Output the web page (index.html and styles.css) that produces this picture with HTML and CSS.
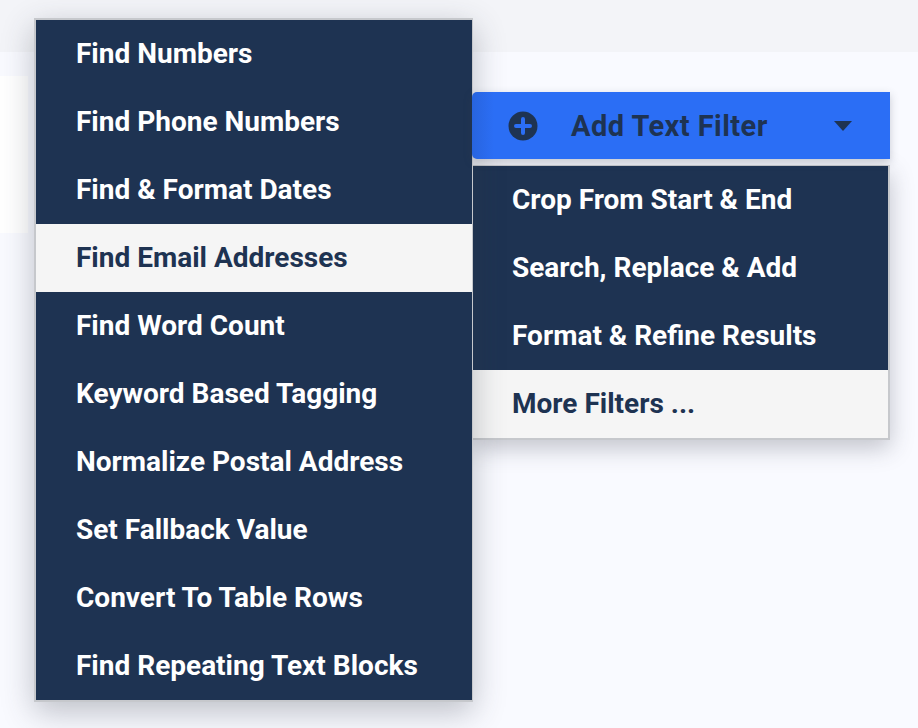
FILE: index.html
```html
<!DOCTYPE html>
<html lang="en">
<head>
<meta charset="utf-8">
<title>Add Text Filter</title>
<link rel="stylesheet" href="styles.css">
</head>
<body>
<header class="topbar"></header>
<main class="content">
  <div class="panel"></div>
  <div class="filter-col">
    <button class="add-btn" type="button">
      <svg class="plus" viewBox="0 0 30 30" width="30" height="30" aria-hidden="true">
        <circle cx="15" cy="15" r="14.5" fill="#1e3352"/>
        <path d="M15 8v14M8 15h14" stroke="#2b6ef5" stroke-width="4" stroke-linecap="round" fill="none"/>
      </svg>
      <span class="add-label">Add Text Filter</span>
      <svg class="caret" viewBox="0 0 18 10" width="18" height="10" aria-hidden="true">
        <path d="M0 0h18L9 10z" fill="#1e3352"/>
      </svg>
    </button>
    <ul class="menu submenu">
      <li>Crop From Start &amp; End</li>
      <li>Search, Replace &amp; Add</li>
      <li>Format &amp; Refine Results</li>
      <li class="active">More Filters ...</li>
    </ul>
  </div>
  <ul class="menu mainmenu">
    <li>Find Numbers</li>
    <li>Find Phone Numbers</li>
    <li>Find &amp; Format Dates</li>
    <li class="active">Find Email Addresses</li>
    <li>Find Word Count</li>
    <li>Keyword Based Tagging</li>
    <li>Normalize Postal Address</li>
    <li>Set Fallback Value</li>
    <li>Convert To Table Rows</li>
    <li>Find Repeating Text Blocks</li>
  </ul>
</main>
</body>
</html>
```

FILE: styles.css
```css
* { box-sizing: border-box; }
html, body { margin: 0; height: 100%; }
body {
  width: 918px;
  height: 728px;
  overflow: hidden;
  background: #f9faff;
  font-family: Roboto, "Liberation Sans", sans-serif;
  position: relative;
}
.topbar { height: 52px; background: #f3f4f8; }
.content {
  display: flex;
  align-items: flex-start;
  padding-top: 24px;
}
.panel { width: 28px; height: 157px; background: #fff; flex: none; }
.filter-col {
  margin-left: 444px;
  margin-top: 16px;
  width: 418px;
  flex: none;
  display: flex;
  flex-direction: column;
}
.add-btn {
  position: relative;
  z-index: 2;
  height: 67px;
  width: 418px;
  display: flex;
  align-items: center;
  padding: 0 38px 0 36px;
  background: linear-gradient(to right, rgba(20, 40, 90, .14), rgba(20, 40, 90, 0) 22px), #2b6ef5;
  border: 0;
  border-radius: 5px 0 0 5px;
  font: inherit;
  color: #1e3352;
  box-shadow: 0 3px 8px rgba(60, 64, 80, .25);
}
.add-label {
  font-size: 29px;
  font-weight: 700;
  margin-left: 33px;
  flex: 1;
  text-align: left;
  letter-spacing: .45px;
}
.plus, .caret { flex: none; }
.menu {
  list-style: none;
  margin: 0;
  padding: 0;
  background: #1e3352;
  color: #fff;
  font-size: 28px;
  font-weight: 700;
  border-style: solid;
  border-color: #c6c8cc;
}
.menu li {
  height: 68px;
  line-height: 68px;
  white-space: nowrap;
}
.menu li.active { background: #f5f5f5; color: #1e3352; }
.mainmenu {
  position: absolute;
  left: 34px;
  top: 18px;
  width: 439px;
  border-width: 2px 1px 2px 2px;
  box-shadow: 0 10px 30px rgba(50, 55, 70, .3);
}
.mainmenu li { padding-left: 40px; }
.submenu {
  margin-top: 6px;
  width: 418px;
  border-width: 1px 2px 2px 0;
  box-shadow: 0 8px 22px rgba(50, 55, 70, .28);
}
.submenu li { padding-left: 40px; }
```
